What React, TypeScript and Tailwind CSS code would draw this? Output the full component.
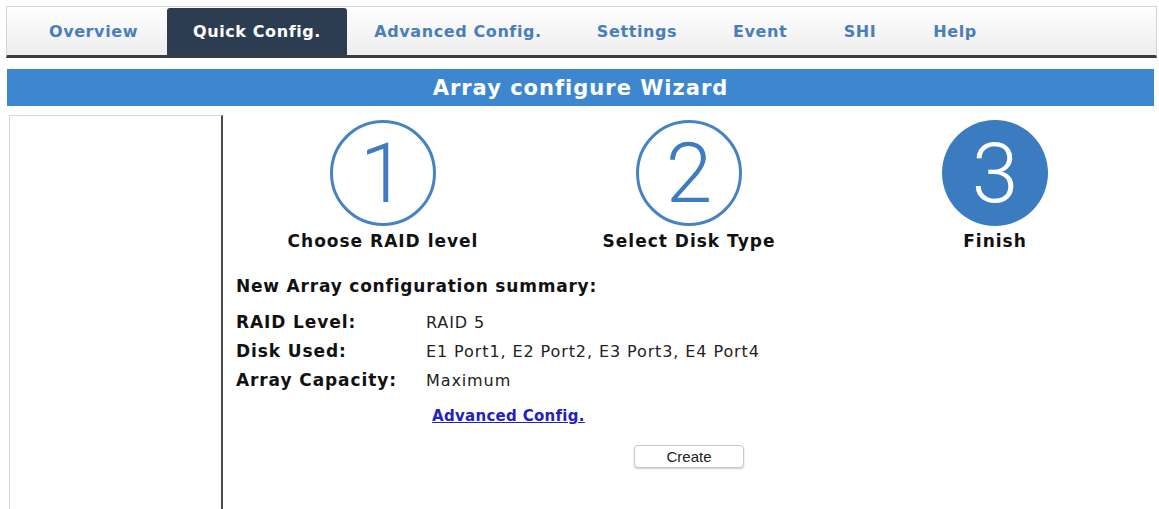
import React from 'react';

const tabs = [
  { label: 'Overview', w: 'w-[147px]' },
  { label: 'Quick Config.', w: 'w-[180px]', active: true },
  { label: 'Advanced Config.', w: 'w-[222px]' },
  { label: 'Settings', w: 'w-[136px]' },
  { label: 'Event', w: 'w-[110px]' },
  { label: 'SHI', w: 'w-[90px]' },
  { label: 'Help', w: 'w-[100px]' },
];

const steps = [
  { n: '1', label: 'Choose RAID level' },
  { n: '2', label: 'Select Disk Type' },
  { n: '3', label: 'Finish', done: true },
];

const summary = [
  { k: 'RAID Level:', v: 'RAID 5' },
  { k: 'Disk Used:', v: 'E1 Port1, E2 Port2, E3 Port3, E4 Port4' },
  { k: 'Array Capacity:', v: 'Maximum' },
];

const bold = "font-['DejaVu_Sans',sans-serif] font-bold";

export default function App() {
  return (
    <div className="w-[1159px] h-[509px] bg-white overflow-hidden flex flex-col">
      {/* top nav */}
      <div className="mt-[6px] ml-[6px] mr-[2px] h-[52px] border border-[#d4d4d4] border-b-[3px] border-b-[#3a3d42] bg-gradient-to-b from-white to-[#ededed] flex items-end pl-[13px]">
        {tabs.map(t => (
          <div
            key={t.label}
            className={`${t.w} h-[47px] flex items-center justify-center text-[16px] tracking-[0.6px] ${bold} ${
              t.active ? 'bg-[#2c3d52] text-white rounded-t-[3px]' : 'text-[#4a7eb9]'
            }`}
          >
            {t.label}
          </div>
        ))}
      </div>

      {/* banner */}
      <div className="mt-[11px] ml-[7px] mr-[5px] h-[37px] pt-[2px] bg-[#3d87d0] flex items-center justify-center text-white text-[21px] tracking-[1px] font-['DejaVu_Sans',sans-serif] font-bold">
        Array configure Wizard
      </div>

      <div className="flex flex-1 mt-[9px]">
        {/* left panel */}
        <div className="ml-[9px] w-[214px] border-l border-t border-[#d8d8d8] border-r-2 border-r-[#4a4a4a]" />

        {/* content */}
        <div className="flex-1 flex flex-col">
          <div className="flex pt-[5px]">
            {steps.map((s, i) => (
              <div key={s.n} className={`flex flex-col items-center w-[106px] ${i === 0 ? 'ml-[107px]' : 'ml-[200px]'}`}>
                <div
                  className={`w-[106px] h-[106px] rounded-full flex items-center justify-center font-['Roboto',sans-serif] font-light text-[84px] leading-none ${
                    s.done ? 'bg-[#3b7cc1] text-white' : 'border-[3px] border-[#4583c6] text-[#3d7cc0]'
                  }`}
                >
                  <span className="mt-[2px]">{s.n}</span>
                </div>
                <div className={`mt-[3px] whitespace-nowrap text-[17px] tracking-[1px] text-[#111] ${bold}`}>{s.label}</div>
              </div>
            ))}
          </div>

          <div className="pl-[13px] mt-[19px]">
            <div className={`text-[17px] tracking-[0.8px] text-[#111] ${bold}`}>New Array configuration summary:</div>
            <div className="mt-[14px] flex flex-col gap-[9px]">
              {summary.map(r => (
                <div key={r.k} className="flex items-center h-[20px]">
                  <div className={`w-[190px] text-[17px] tracking-[0.9px] text-[#111] ${bold}`}>{r.k}</div>
                  <div className="text-[16px] tracking-[0.9px] text-[#222] font-['DejaVu_Sans',sans-serif]">{r.v}</div>
                </div>
              ))}
            </div>
            <div className="mt-[12px] pl-[196px]">
              <a href="#" className={`text-[15px] tracking-[0.3px] text-[#2121c4] underline ${bold}`}>Advanced Config.</a>
            </div>
            <div className="mt-[16px] pl-[398px]">
              <button className="w-[110px] h-[23px] rounded-[4px] border border-[#c8c8c8] bg-white shadow-[0_1px_2px_rgba(0,0,0,0.2)] text-[15px] text-[#222] font-['Liberation_Sans',sans-serif]">
                Create
              </button>
            </div>
          </div>
        </div>
      </div>
    </div>
  );
}
